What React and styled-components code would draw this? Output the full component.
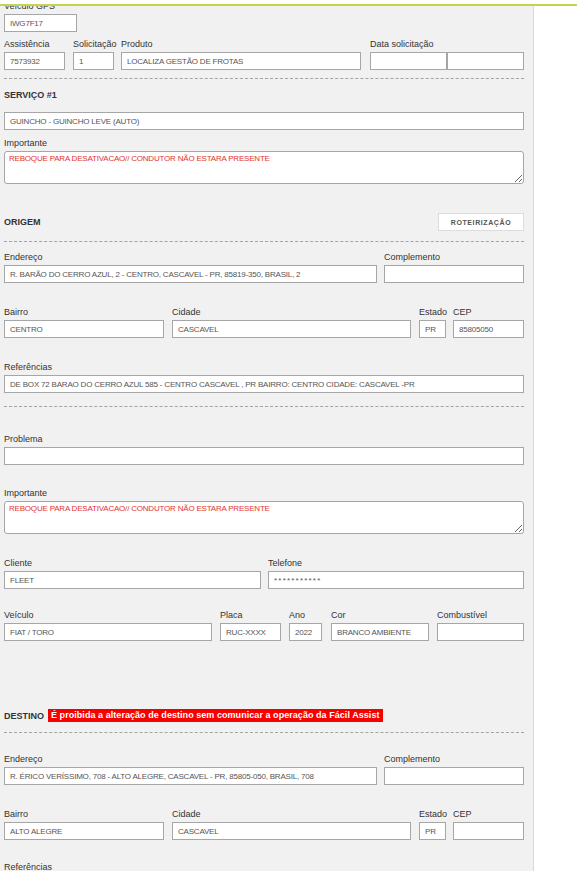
import React from "react";
import styled, { createGlobalStyle } from "styled-components";

const GlobalStyle = createGlobalStyle`
  html, body {
    margin: 0;
    padding: 0;
    background: #fff;
  }
  body {
    font-family: "Liberation Sans", Arial, sans-serif;
  }
`;

const TopBar = styled.div`
  position: fixed;
  top: 0;
  left: 0;
  right: 0;
  height: 4px;
  background: #fff;
  border-bottom: 2px solid #c6d34e;
  z-index: 10;
`;

const Panel = styled.div`
  width: 520px;
  padding: 1px 9px 40px 4px;
  background: #f1f1f1;
  border-right: 1px solid #dadada;
  min-height: 900px;
`;

const Row = styled.div`
  display: flex;
  align-items: flex-end;
  margin-top: ${(p) => p.$mt || 0}px;
`;

const Field = styled.div`
  width: ${(p) => (p.$w ? `${p.$w}px` : "auto")};
  flex: ${(p) => (p.$w ? "none" : 1)};
  margin-left: ${(p) => p.$gap || 0}px;
`;

const Label = styled.label`
  display: block;
  font-size: 9px;
  line-height: 11px;
  color: #333;
  margin-bottom: 2px;
  white-space: nowrap;
`;

const Input = styled.input`
  display: block;
  width: 100%;
  height: 18px;
  box-sizing: border-box;
  border: 1px solid #a6a6a6;
  border-radius: 0;
  background: #fff;
  font-family: "Liberation Sans", Arial, sans-serif;
  font-size: 8px;
  letter-spacing: ${(p) => (p.$spaced ? "1.2px" : "-0.2px")};
  color: #555;
  padding: 0 5px;
  outline: none;
`;

const Pair = styled.div`
  display: flex;
`;

const TextArea = styled.textarea`
  display: block;
  width: 100%;
  height: 33px;
  box-sizing: border-box;
  border: 1px solid #a6a6a6;
  border-radius: 3px;
  background: #fff;
  font-family: "Liberation Sans", Arial, sans-serif;
  font-size: 8px;
  letter-spacing: -0.2px;
  color: #e3342f;
  padding: 2px 4px;
  resize: vertical;
  outline: none;
`;

const Divider = styled.hr`
  border: 0;
  border-top: 1px dashed #a3a3a3;
  height: 0;
  margin: ${(p) => p.$mt || 0}px 0 0;
`;

const Heading = styled.div`
  display: flex;
  align-items: center;
  justify-content: space-between;
  margin-top: ${(p) => p.$mt || 0}px;
  min-height: ${(p) => p.$h || 12}px;
  font-size: 9px;
  font-weight: bold;
  color: #333;
`;

const HeadLeft = styled.div`
  display: flex;
  align-items: center;
  gap: 4px;
`;

const Warning = styled.span`
  background: #f70000;
  color: #fff;
  font-size: 9px;
  font-weight: bold;
  line-height: 13px;
  padding: 0 3px;
  letter-spacing: 0.05px;
`;

const RouteButton = styled.button`
  width: 86px;
  height: 18px;
  box-sizing: border-box;
  background: #fff;
  border: 1px solid #dcdcdc;
  font-family: "Liberation Sans", Arial, sans-serif;
  font-size: 7px;
  font-weight: bold;
  letter-spacing: 0.6px;
  color: #555;
  padding: 0;
  cursor: pointer;
`;

function F({ label, value = "", w, gap, spaced }) {
  return (
    <Field $w={w} $gap={gap}>
      <Label>{label}</Label>
      <Input readOnly value={value} $spaced={spaced} />
    </Field>
  );
}

function Address({ mt, endereco, bairro, cidade, estado, cep, referencias }) {
  return (
    <>
      <Row $mt={mt}>
        <F label="Endereço" value={endereco} w={373} />
        <F label="Complemento" gap={7} />
      </Row>
      <Row $mt={24}>
        <F label="Bairro" value={bairro} w={160} />
        <F label="Cidade" value={cidade} w={239} gap={8} />
        <F label="Estado" value={estado} w={27} gap={8} />
        <F label="CEP" value={cep} gap={7} />
      </Row>
      <Row $mt={referencias === undefined ? 22 : 24}>
        <Field>
          <Label>Referências</Label>
          {referencias !== undefined && <Input readOnly value={referencias} />}
        </Field>
      </Row>
    </>
  );
}

export default function App() {
  const aviso = "REBOQUE PARA DESATIVACAO// CONDUTOR NÃO ESTARA PRESENTE";
  return (
    <>
      <GlobalStyle />
      <TopBar />
      <Panel>
        <Row>
          <F label="Veículo GPS" value="IWG7F17" w={73} />
        </Row>
        <Row $mt={7}>
          <F label="Assistência" value="7573932" w={61} />
          <F label="Solicitação" value="1" w={41} gap={8} />
          <F label="Produto" value="LOCALIZA GESTÃO DE FROTAS" w={240} gap={7} />
          <Field $gap={9}>
            <Label>Data solicitação</Label>
            <Pair>
              <Input readOnly value="" />
              <Input readOnly value="" />
            </Pair>
          </Field>
        </Row>
        <Divider $mt={8} />

        <Heading $mt={10}>SERVIÇO #1</Heading>
        <Row $mt={11}>
          <Field>
            <Input readOnly value="GUINCHO - GUINCHO LEVE (AUTO)" />
          </Field>
        </Row>
        <Row $mt={8}>
          <Field>
            <Label>Importante</Label>
            <TextArea readOnly value={aviso} />
          </Field>
        </Row>

        <Heading $mt={29} $h={18}>
          ORIGEM
          <RouteButton>ROTEIRIZAÇÃO</RouteButton>
        </Heading>
        <Divider $mt={10} />
        <Address
          mt={10}
          endereco="R. BARÃO DO CERRO AZUL, 2 - CENTRO, CASCAVEL - PR, 85819-350, BRASIL, 2"
          bairro="CENTRO"
          cidade="CASCAVEL"
          estado="PR"
          cep="85805050"
          referencias="DE BOX 72 BARAO DO CERRO AZUL 585 - CENTRO CASCAVEL , PR BAIRRO: CENTRO CIDADE: CASCAVEL -PR"
        />
        <Divider $mt={13} />

        <Row $mt={27}>
          <F label="Problema" />
        </Row>
        <Row $mt={23}>
          <Field>
            <Label>Importante</Label>
            <TextArea readOnly value={aviso} />
          </Field>
        </Row>
        <Row $mt={24}>
          <F label="Cliente" value="FLEET" w={257} />
          <F label="Telefone" value="***********" gap={7} spaced />
        </Row>
        <Row $mt={21}>
          <F label="Veículo" value="FIAT / TORO" w={208} />
          <F label="Placa" value="RUC-XXXX" w={61} gap={8} />
          <F label="Ano" value="2022" w={33} gap={8} />
          <F label="Cor" value="BRANCO AMBIENTE" w={98} gap={9} />
          <F label="Combustível" gap={8} />
        </Row>

        <Heading $mt={68} $h={13}>
          <HeadLeft>
            DESTINO
            <Warning>
              É proibida a alteração de destino sem comunicar a operação da Fácil Assist
            </Warning>
          </HeadLeft>
        </Heading>
        <Divider $mt={10} />
        <Address
          mt={21}
          endereco="R. ÉRICO VERÍSSIMO, 708 - ALTO ALEGRE, CASCAVEL - PR, 85805-050, BRASIL, 708"
          bairro="ALTO ALEGRE"
          cidade="CASCAVEL"
          estado="PR"
          cep=""
        />
      </Panel>
    </>
  );
}
